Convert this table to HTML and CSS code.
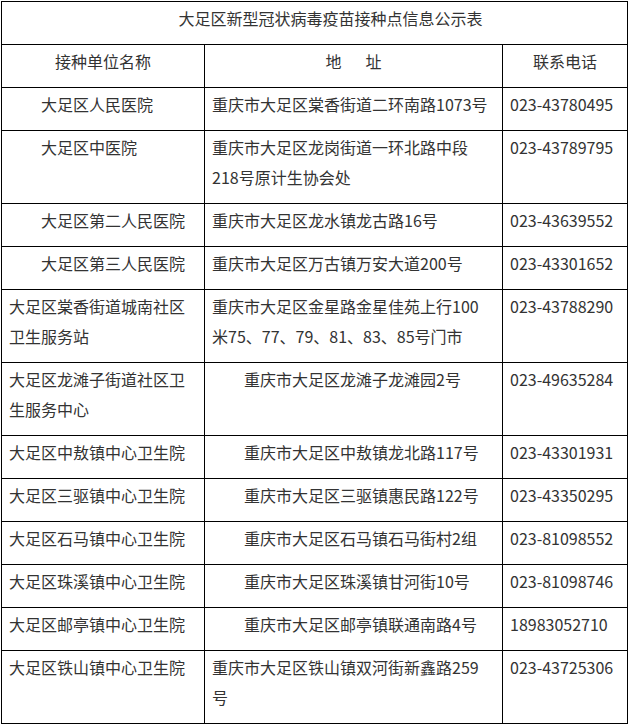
FILE: index.html
```html
<!DOCTYPE html>
<html lang="zh-CN">
<head>
<meta charset="utf-8">
<title>大足区新型冠状病毒疫苗接种点信息公示表</title>
<link rel="stylesheet" href="styles.css">
</head>
<body>
<table class="sheet">
  <colgroup>
    <col class="c-name">
    <col class="c-addr">
    <col class="c-tel">
  </colgroup>
  <tr><td class="title" colspan="3">大足区新型冠状病毒疫苗接种点信息公示表</td></tr>
  <tr>
    <td class="head">接种单位名称</td>
    <td class="head">地<span class="gap"></span>址</td>
    <td class="head">联系电话</td>
  </tr>
  <tr><td class="ind">大足区人民医院</td><td>重庆市大足区棠香街道二环南路1073号</td><td>023-43780495</td></tr>
  <tr><td class="ind">大足区中医院</td><td>重庆市大足区龙岗街道一环北路中段<br>218号原计生协会处</td><td>023-43789795</td></tr>
  <tr><td class="ind">大足区第二人民医院</td><td>重庆市大足区龙水镇龙古路16号</td><td>023-43639552</td></tr>
  <tr><td class="ind">大足区第三人民医院</td><td>重庆市大足区万古镇万安大道200号</td><td>023-43301652</td></tr>
  <tr><td>大足区棠香街道城南社区<br>卫生服务站</td><td>重庆市大足区金星路金星佳苑上行100<br>米75、77、79、81、83、85号门市</td><td>023-43788290</td></tr>
  <tr><td>大足区龙滩子街道社区卫<br>生服务中心</td><td class="ind">重庆市大足区龙滩子龙滩园2号</td><td>023-49635284</td></tr>
  <tr><td>大足区中敖镇中心卫生院</td><td class="ind">重庆市大足区中敖镇龙北路117号</td><td>023-43301931</td></tr>
  <tr><td>大足区三驱镇中心卫生院</td><td class="ind">重庆市大足区三驱镇惠民路122号</td><td>023-43350295</td></tr>
  <tr><td>大足区石马镇中心卫生院</td><td class="ind">重庆市大足区石马镇石马街村2组</td><td>023-81098552</td></tr>
  <tr><td>大足区珠溪镇中心卫生院</td><td class="ind">重庆市大足区珠溪镇甘河街10号</td><td>023-81098746</td></tr>
  <tr><td>大足区邮亭镇中心卫生院</td><td class="ind">重庆市大足区邮亭镇联通南路4号</td><td>18983052710</td></tr>
  <tr><td>大足区铁山镇中心卫生院</td><td>重庆市大足区铁山镇双河街新鑫路259<br>号</td><td>023-43725306</td></tr>
</table>
</body>
</html>
```
FILE: styles.css
```css
html, body {
  margin: 0;
  padding: 0;
  background: #fff;
}
body {
  padding: 1px 0 0 1px;
  font-family: "Noto Sans CJK SC", "Noto Sans", sans-serif;
  font-size: 16px;
  color: #333;
}
.sheet {
  border-collapse: collapse;
  table-layout: fixed;
  width: 626px;
}
.c-name { width: 203px; }
.c-addr { width: 298px; }
.c-tel { width: 125px; }
.sheet td {
  border: 1px solid #000;
  padding: 1px 7px 11px;
  line-height: 30px;
  vertical-align: top;
  text-align: left;
  white-space: nowrap;
}
.sheet td.title {
  text-align: center;
  text-indent: 2em;
}
.sheet td.head {
  text-align: center;
}
.sheet td.ind {
  text-indent: 2em;
}
.gap {
  display: inline-block;
  width: 24px;
}
```
